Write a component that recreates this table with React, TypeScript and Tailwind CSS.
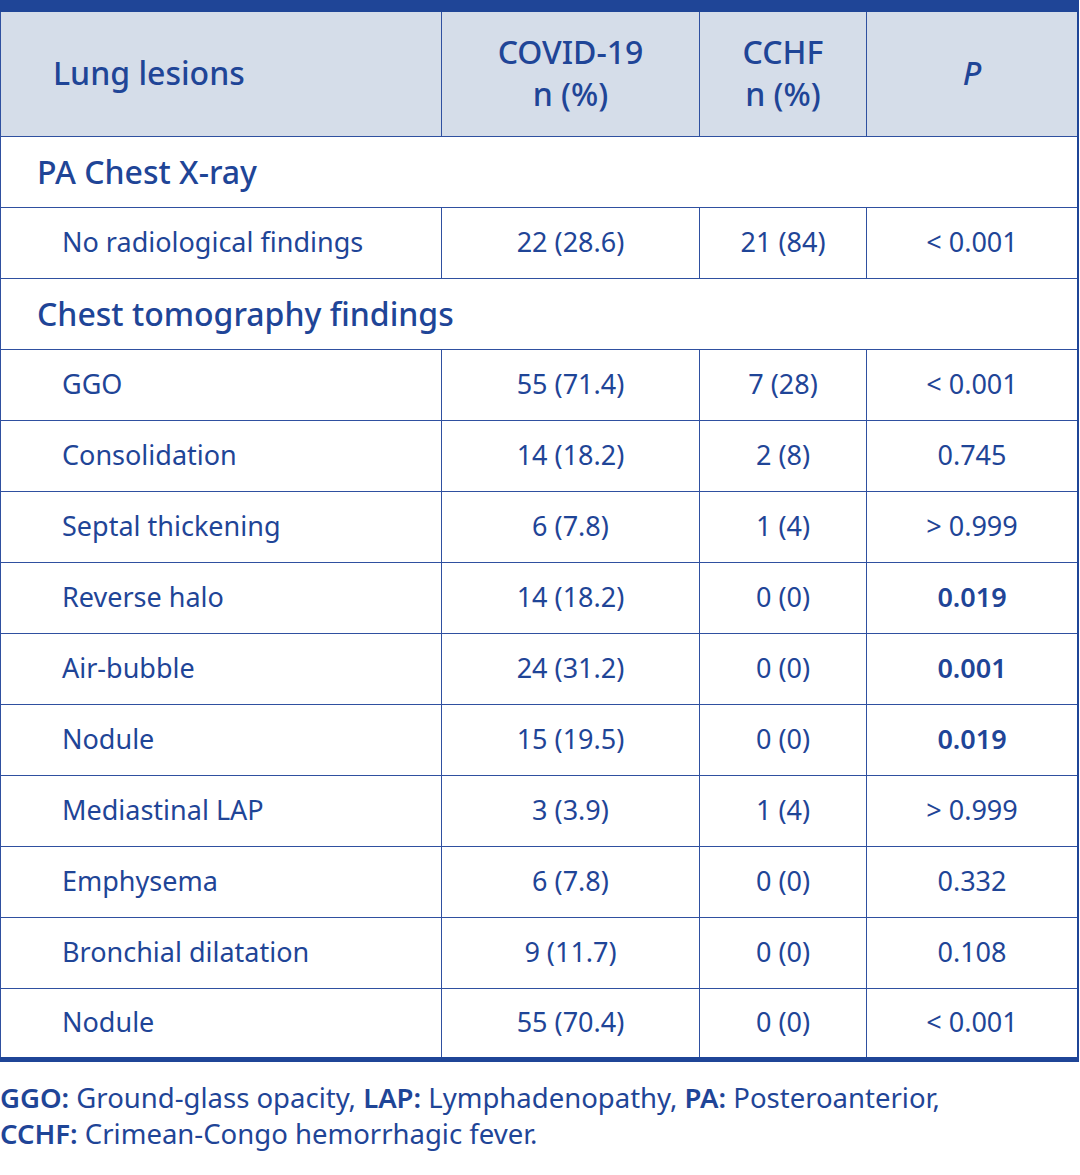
const rows: { label: string; covid: string; cchf: string; p: string; bold?: boolean }[] = [
  { label: "GGO", covid: "55 (71.4)", cchf: "7 (28)", p: "< 0.001" },
  { label: "Consolidation", covid: "14 (18.2)", cchf: "2 (8)", p: "0.745" },
  { label: "Septal thickening", covid: "6 (7.8)", cchf: "1 (4)", p: "> 0.999" },
  { label: "Reverse halo", covid: "14 (18.2)", cchf: "0 (0)", p: "0.019", bold: true },
  { label: "Air-bubble", covid: "24 (31.2)", cchf: "0 (0)", p: "0.001", bold: true },
  { label: "Nodule", covid: "15 (19.5)", cchf: "0 (0)", p: "0.019", bold: true },
  { label: "Mediastinal LAP", covid: "3 (3.9)", cchf: "1 (4)", p: "> 0.999" },
  { label: "Emphysema", covid: "6 (7.8)", cchf: "0 (0)", p: "0.332" },
  { label: "Bronchial dilatation", covid: "9 (11.7)", cchf: "0 (0)", p: "0.108" },
  { label: "Nodule", covid: "55 (70.4)", cchf: "0 (0)", p: "< 0.001" },
];

function DataRow({ label, covid, cchf, p, bold }: { label: string; covid: string; cchf: string; p: string; bold?: boolean }) {
  return (
    <tr className="h-[71px]">
      <td className="border border-[#2f50a0] pl-[61px] text-left">{label}</td>
      <td className="border border-[#2f50a0] text-center">{covid}</td>
      <td className="border border-[#2f50a0] text-center">{cchf}</td>
      <td className={"border border-[#2f50a0] text-center " + (bold ? "font-semibold" : "")}>{p}</td>
    </tr>
  );
}

function SectionRow({ title }: { title: string }) {
  return (
    <tr className="h-[71px]">
      <td colSpan={4} className="border border-[#2f50a0] pl-[36px] text-left text-[32px] font-medium">
        {title}
      </td>
    </tr>
  );
}

export default function App() {
  return (
    <div
      className="w-[1080px] h-[1175px] bg-white text-[#1f4597]"
      style={{ fontFamily: "'Noto Sans', 'Open Sans', sans-serif" }}
    >
      <table className="w-[1079px] border-collapse table-fixed text-[27px] border-t-[12px] border-t-[#1f4597] border-b-[5px] border-b-[#1f4597] border-r-2 border-r-[#1f4597]">
        <colgroup>
          <col className="w-[441px]" />
          <col className="w-[258px]" />
          <col className="w-[167px]" />
          <col />
        </colgroup>
        <thead>
          <tr className="h-[130px] bg-[#d5dde9] text-[32px] font-medium leading-[42px]">
            <th className="border border-[#2f50a0] border-t-0 pl-[52px] pb-[2px] text-left font-medium">Lung lesions</th>
            <th className="border border-[#2f50a0] border-t-0 pb-[2px] text-center font-medium">
              COVID-19
              <br />n (%)
            </th>
            <th className="border border-[#2f50a0] border-t-0 pb-[2px] text-center font-medium">
              CCHF
              <br />n (%)
            </th>
            <th className="border border-[#2f50a0] border-t-0 pb-[2px] text-center font-medium italic">P</th>
          </tr>
        </thead>
        <tbody>
          <SectionRow title="PA Chest X-ray" />
          <DataRow label="No radiological findings" covid="22 (28.6)" cchf="21 (84)" p="< 0.001" />
          <SectionRow title="Chest tomography findings" />
          {rows.map((r, i) => (
            <DataRow key={i} {...r} />
          ))}
        </tbody>
      </table>
      <p className="mt-[18px] text-[27.5px] leading-[36px]">
        <b className="font-semibold">GGO:</b> Ground-glass opacity, <b className="font-semibold">LAP:</b> Lymphadenopathy,{" "}
        <b className="font-semibold">PA:</b> Posteroanterior,
        <br />
        <b className="font-semibold">CCHF:</b> Crimean-Congo hemorrhagic fever.
      </p>
    </div>
  );
}
